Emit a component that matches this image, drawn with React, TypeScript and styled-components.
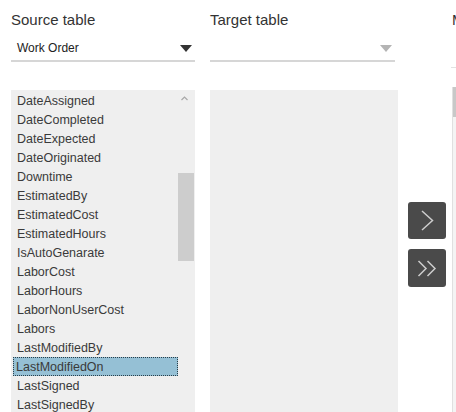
import React from "react";
import styled, { createGlobalStyle } from "styled-components";

const GlobalStyle = createGlobalStyle`
  html, body {
    margin: 0;
    padding: 0;
    background: #ffffff;
    overflow: hidden;
  }
  body {
    font-family: "Liberation Sans", Arial, sans-serif;
  }
`;

const Page = styled.div`
  display: flex;
  align-items: flex-start;
  padding: 11px 0 0 11px;
  height: 412px;
  box-sizing: border-box;
  overflow: hidden;
  width: 456px;
`;

const Column = styled.div<{ $w: number; $gap: number }>`
  display: flex;
  flex-direction: column;
  width: ${(p) => p.$w}px;
  flex: 0 0 ${(p) => p.$w}px;
  margin-right: ${(p) => p.$gap}px;
`;

const Label = styled.div`
  font-size: 15px;
  line-height: 18px;
  height: 18px;
  color: #333;
  white-space: nowrap;
`;

const Select = styled.div<{ $width: number }>`
  display: flex;
  align-items: center;
  justify-content: space-between;
  width: ${(p) => p.$width}px;
  height: 24px;
  margin-top: 7px;
  border-bottom: 2px solid #d6d6d6;
  padding: 0 3px 0 6px;
  box-sizing: content-box;
  font-size: 12px;
  color: #222;
`;

const Caret = styled.span<{ $muted?: boolean }>`
  width: 0;
  height: 0;
  border-left: 6px solid transparent;
  border-right: 6px solid transparent;
  border-top: 7px solid ${(p) => (p.$muted ? "#b4b4b4" : "#333")};
  margin-top: 1px;
`;

const ListBox = styled.div<{ $height: number }>`
  position: relative;
  margin-top: 28px;
  height: ${(p) => p.$height}px;
  background: #efefef;
  padding: 1px 17px 0 2px;
  box-sizing: border-box;
  overflow: hidden;
`;

const Item = styled.div<{ $selected?: boolean }>`
  height: 19px;
  line-height: 20px;
  padding-left: 4px;
  font-size: 12.5px;
  color: #3a3a3a;
  white-space: nowrap;
  box-sizing: border-box;
  ${(p) =>
    p.$selected &&
    `
    background: #95c0d5;
    outline: 1px dotted #2a3f4a;
    outline-offset: -1px;
    padding-left: 3px;
  `}
`;

const ScrollThumb = styled.div`
  position: absolute;
  right: 1px;
  top: 83px;
  width: 16px;
  height: 88px;
  background: #cdcdcd;
`;

const ScrollUp = styled.svg`
  position: absolute;
  right: 7px;
  top: 6px;
`;

const ButtonStack = styled.div`
  display: flex;
  flex-direction: column;
  gap: 10px;
  margin-top: 191px;
  width: 38px;
  flex: 0 0 38px;
  margin-right: 6px;
`;

const MoveButton = styled.button`
  width: 38px;
  height: 37px;
  padding: 0;
  border: none;
  border-radius: 3px;
  background: #4a4a4a;
  display: flex;
  align-items: center;
  justify-content: center;
  cursor: pointer;
  & + & {
    height: 38px;
  }
`;

const MappingSelect = styled.div`
  margin-top: 30px;
  height: 8px;
  border-bottom: 1px solid #e2e2e2;
  margin-left: -1px;
`;

const MappingList = styled.div`
  position: relative;
  margin-top: 19px;
  height: 330px;
  background: #f4f4f4;
  border-left: 1px solid #e0e0e0;
`;

const MappingThumb = styled.div`
  position: absolute;
  left: 0;
  top: 0;
  width: 3px;
  height: 30px;
  background: #c8c8c8;
`;

const fields = [
  "DateAssigned",
  "DateCompleted",
  "DateExpected",
  "DateOriginated",
  "Downtime",
  "EstimatedBy",
  "EstimatedCost",
  "EstimatedHours",
  "IsAutoGenarate",
  "LaborCost",
  "LaborHours",
  "LaborNonUserCost",
  "Labors",
  "LastModifiedBy",
  "LastModifiedOn",
  "LastSigned",
  "LastSignedBy",
];

/* Arrow glyphs drawn on the 38px move buttons */
const Chevron = ({ double }: { double?: boolean }) => (
  <svg width="38" height="37" viewBox="0 0 38 37" fill="none">
    {double ? (
      <>
        <polyline points="10.5,11 18,18.5 10.5,26" stroke="#cdcdcd" strokeWidth="1.5" />
        <polyline points="19.5,11 27,18.5 19.5,26" stroke="#cdcdcd" strokeWidth="1.5" />
      </>
    ) : (
      <polyline points="14,9 24.5,18.5 14,28" stroke="#cdcdcd" strokeWidth="1.5" />
    )}
  </svg>
);

export default function App() {
  return (
    <>
      <GlobalStyle />
      <Page>
        <Column $w={184} $gap={15}>
          <Label>Source table</Label>
          <Select $width={175}>
            <span>Work Order</span>
            <Caret />
          </Select>
          <ListBox $height={340}>
            {fields.map((f) => (
              <Item key={f} $selected={f === "LastModifiedOn"}>
                {f}
              </Item>
            ))}
            <ScrollUp width="7" height="5" viewBox="0 0 7 5">
              <polyline points="0.5,4 3.5,1 6.5,4" stroke="#a8a8a8" strokeWidth="1.2" fill="none" />
            </ScrollUp>
            <ScrollThumb />
          </ListBox>
        </Column>
        <Column $w={188} $gap={10}>
          <Label>Target table</Label>
          <Select $width={176}>
            <span />
            <Caret $muted />
          </Select>
          <ListBox $height={340} />
        </Column>
        <ButtonStack>
          <MoveButton aria-label="Move selected">
            <Chevron />
          </MoveButton>
          <MoveButton aria-label="Move all">
            <Chevron double />
          </MoveButton>
        </ButtonStack>
        <Column $w={120} $gap={0}>
          <Label>Mapping</Label>
          <MappingSelect />
          <MappingList>
            <MappingThumb />
          </MappingList>
        </Column>
      </Page>
    </>
  );
}
